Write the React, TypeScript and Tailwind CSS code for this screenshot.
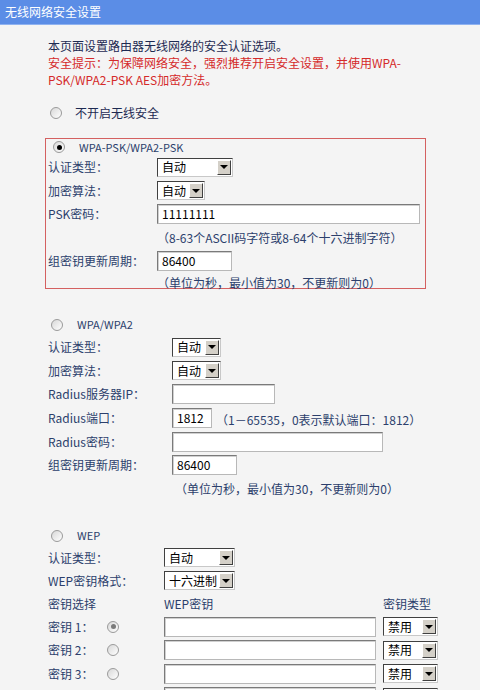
import React from "react";

const font = { fontFamily: '"Noto Sans CJK SC", "Liberation Sans", sans-serif' };

const Radio = ({ checked = false, grey = false }: { checked?: boolean; grey?: boolean }) => (
  <span className="relative inline-flex w-[12px] h-[12px] rounded-full border border-[#9a9a9a] bg-gradient-to-br from-[#d8d8d8] to-white items-center justify-center shrink-0">
    {checked && (
      <span className={`w-[5px] h-[5px] rounded-full ${grey ? "bg-[#7a7a7a]" : "bg-black"}`} />
    )}
  </span>
);

const Select = ({ value, width }: { value: string; width: string }) => (
  <div
    className={`${width} h-[19px] flex items-center bg-white border border-t-[#404040] border-l-[#404040] border-b-[#c8c8c8] border-r-[#c8c8c8] pl-[4px] pr-[1px]`}
  >
    <span className="flex-1 text-[12px] text-black leading-none whitespace-nowrap">{value}</span>
    <span className="w-[14px] h-[15px] bg-[#d4d0c8] border border-t-white border-l-white border-b-[#404040] border-r-[#404040] flex items-center justify-center">
      <span className="w-0 h-0 border-l-[4px] border-r-[4px] border-t-[4px] border-l-transparent border-r-transparent border-t-black" />
    </span>
  </div>
);

const Input = ({ value = "", width }: { value?: string; width: string }) => (
  <div
    className={`${width} h-[20px] flex items-center bg-white border border-t-[#7a7a7a] border-l-[#7a7a7a] border-b-[#b8b8b8] border-r-[#b8b8b8] shadow-[inset_1px_1px_0_#d0d0d0] px-[4px]`}
  >
    <span className="text-[12px] text-black leading-none">{value}</span>
  </div>
);

const Row = ({
  h,
  label,
  lw,
  children,
}: {
  h: string;
  label?: string;
  lw: string;
  children?: React.ReactNode;
}) => (
  <div className={`${h} flex items-center`}>
    <div className={`${lw} shrink-0 text-[12px] text-[#2c3f6c] whitespace-nowrap`}>{label}</div>
    <div className="flex items-center">{children}</div>
  </div>
);

const Hint = ({ children }: { children: React.ReactNode }) => (
  <span className="text-[12px] text-[#2c3f6c] whitespace-nowrap">{children}</span>
);

export default function App() {
  return (
    <div className="w-[480px] h-[690px] overflow-hidden bg-[#f4f4f4]" style={font}>
      <div className="h-[25px] bg-[#5b8de6] border-b border-[#8fb2f0] flex items-center pl-[5px]">
        <span className="text-white text-[12px]">无线网络安全设置</span>
      </div>

      <div className="pl-[48px] pt-[12px] text-[12px] leading-[17px]">
        <p className="text-[#1d2a52]">本页面设置路由器无线网络的安全认证选项。</p>
        <p className="text-[#d42a2a]">安全提示：为保障网络安全，强烈推荐开启安全设置，并使用WPA-</p>
        <p className="text-[#d42a2a]">PSK/WPA2-PSK AES加密方法。</p>
      </div>

      <div className="h-[21px] mt-[14px] flex items-center pl-[50px] gap-[13px]">
        <Radio />
        <span className="text-[12px] text-[#1d2a52]">不开启无线安全</span>
      </div>

      {/* WPA-PSK box */}
      <div className="ml-[45px] mt-[15px] w-[381px] h-[151px] border border-[#d46060] pl-[2px]">
        <div className="h-[16px] flex items-center pl-[5px] gap-[14px]">
          <Radio checked />
          <span className="text-[11px] text-[#2c3f6c]">WPA-PSK/WPA2-PSK</span>
        </div>
        <Row h="h-[24px]" label="认证类型：" lw="w-[109px]">
          <Select value="自动" width="w-[76px]" />
        </Row>
        <Row h="h-[23px]" label="加密算法：" lw="w-[109px]">
          <Select value="自动" width="w-[48px]" />
        </Row>
        <Row h="h-[24px]" label="PSK密码：" lw="w-[109px]">
          <Input value="11111111" width="w-[263px]" />
        </Row>
        <Row h="h-[23px]" lw="w-[109px]">
          <Hint>（8-63个ASCII码字符或8-64个十六进制字符）</Hint>
        </Row>
        <Row h="h-[24px]" label="组密钥更新周期：" lw="w-[109px]">
          <Input value="86400" width="w-[75px]" />
        </Row>
        <Row h="h-[20px]" lw="w-[109px]">
          <Hint>（单位为秒，最小值为30，不更新则为0）</Hint>
        </Row>
      </div>

      {/* WPA/WPA2 */}
      <div className="pl-[48px] mt-[25px]">
        <div className="h-[21px] flex items-center pl-[3px] gap-[14px]">
          <Radio />
          <span className="text-[11px] text-[#2c3f6c]">WPA/WPA2</span>
        </div>
        <Row h="h-[24px]" label="认证类型：" lw="w-[124px]">
          <Select value="自动" width="w-[49px]" />
        </Row>
        <Row h="h-[23px]" label="加密算法：" lw="w-[124px]">
          <Select value="自动" width="w-[49px]" />
        </Row>
        <Row h="h-[24px]" label="Radius服务器IP：" lw="w-[124px]">
          <Input width="w-[103px]" />
        </Row>
        <Row h="h-[24px]" label="Radius端口：" lw="w-[124px]">
          <Input value="1812" width="w-[40px]" />
          <span className="ml-[4px]">
            <Hint>（1－65535，0表示默认端口：1812）</Hint>
          </span>
        </Row>
        <Row h="h-[23px]" label="Radius密码：" lw="w-[124px]">
          <Input width="w-[211px]" />
        </Row>
        <Row h="h-[24px]" label="组密钥更新周期：" lw="w-[124px]">
          <Input value="86400" width="w-[65px]" />
        </Row>
        <Row h="h-[23px]" lw="w-[127px]">
          <Hint>（单位为秒，最小值为30，不更新则为0）</Hint>
        </Row>
      </div>

      {/* WEP */}
      <div className="pl-[48px] mt-[25px]">
        <div className="h-[21px] flex items-center pl-[3px] gap-[14px]">
          <Radio />
          <span className="text-[11px] text-[#2c3f6c]">WEP</span>
        </div>
        <Row h="h-[23px]" label="认证类型：" lw="w-[116px]">
          <Select value="自动" width="w-[71px]" />
        </Row>
        <Row h="h-[23px]" label="WEP密钥格式：" lw="w-[116px]">
          <Select value="十六进制" width="w-[71px]" />
        </Row>
        <div className="h-[23px] flex items-center text-[12px] text-[#2c3f6c]">
          <span className="w-[116px]">密钥选择</span>
          <span className="w-[219px]">WEP密钥</span>
          <span>密钥类型</span>
        </div>
        {[1, 2, 3].map((n) => (
          <div key={n} className="h-[23.5px] flex items-center text-[12px] text-[#2c3f6c]">
            <span className="w-[59px] whitespace-nowrap">密钥 {n}：</span>
            <span className="w-[57px] flex">
              <Radio checked={n === 1} grey />
            </span>
            <Input width="w-[212px]" />
            <span className="ml-[7px]">
              <Select value="禁用" width="w-[55px]" />
            </span>
          </div>
        ))}
        <div className="h-[23.5px] flex items-center">
          <span className="w-[116px]" />
          <Input width="w-[212px]" />
          <span className="ml-[7px]">
            <Select value="" width="w-[55px]" />
          </span>
        </div>
      </div>
    </div>
  );
}
